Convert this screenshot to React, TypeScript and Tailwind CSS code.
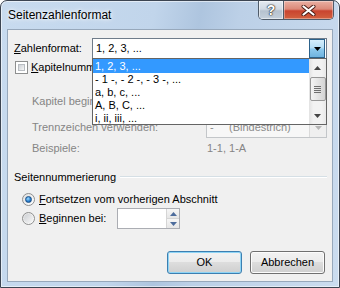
import React from 'react'

const items = ['1, 2, 3, ...', '- 1 -, - 2 -, - 3 -, ...', 'a, b, c, ...', 'A, B, C, ...', 'i, ii, iii, ...']

function Arrow({ dir, color = '#3a3a3a' }: { dir: 'up' | 'down'; color?: string }) {
  return (
    <svg width="7" height="4" viewBox="0 0 7 4">
      <polygon points={dir === 'down' ? '0,0 7,0 3.5,4' : '0,4 7,4 3.5,0'} fill={color} />
    </svg>
  )
}

function CaptionButtons() {
  return (
    <div className="ml-auto flex h-[19px] overflow-hidden rounded-b-[5px] border border-t-0 border-[#4f5b69]">
      {/* help */}
      <div className="flex w-[25px] items-center justify-center border-r border-[#4f5b69] bg-[linear-gradient(to_bottom,#e4eaf1_0%,#d1dae4_45%,#b6c2cf_55%,#c4d0dc_100%)] shadow-[inset_0_0_0_1px_rgba(255,255,255,0.5)]">
        <span className="text-[14px] leading-[14px] font-bold text-white [text-shadow:0_0_1px_#222,0_0_1px_#222,0_0_2px_#333]">?</span>
      </div>
      {/* close */}
      <div className="flex w-[49px] items-center justify-center bg-[linear-gradient(to_bottom,#eab0a3_0%,#dc8979_45%,#c9442f_55%,#d2613f_100%)] shadow-[inset_0_0_0_1px_rgba(255,255,255,0.35)]">
        <svg width="15" height="11" viewBox="0 0 15 11">
          <path d="M2.5 1.5 L12.5 9.5 M12.5 1.5 L2.5 9.5" stroke="#4a1c14" strokeWidth="4" strokeLinecap="round" />
          <path d="M2.5 1.5 L12.5 9.5 M12.5 1.5 L2.5 9.5" stroke="#ffffff" strokeWidth="2.2" strokeLinecap="round" />
        </svg>
      </div>
    </div>
  )
}

function Checkbox() {
  return (
    <div className="h-[13px] w-[13px] border border-[#8e8f8f] bg-white p-[2px]">
      <div className="h-full w-full border border-[#b9bdc2] bg-[linear-gradient(135deg,#cdd1d6,#f6f6f6)]" />
    </div>
  )
}

function Radio({ checked }: { checked?: boolean }) {
  return (
    <div className="flex h-[13px] w-[13px] items-center justify-center rounded-full border border-[#8e8f8f] bg-[linear-gradient(135deg,#e0e0e0,#ffffff)]">
      {checked ? (
        <div className="h-[7px] w-[7px] rounded-full border border-[#1b4f86] bg-[radial-gradient(circle_at_40%_35%,#9fdcff,#2a80d0_55%,#0e4d93)]" />
      ) : (
        <div className="h-[9px] w-[9px] rounded-full bg-[linear-gradient(135deg,#cdd0d4,#f7f7f7)]" />
      )}
    </div>
  )
}

function Button({ children, primary }: { children: React.ReactNode; primary?: boolean }) {
  return (
    <div
      className={
        primary
          ? 'flex h-[23px] w-[75px] items-center justify-center rounded-[3px] border border-[#3c7fb1] bg-[linear-gradient(to_bottom,#f2f2f2_0%,#ebebeb_50%,#dddddd_50%,#cfcfcf_100%)] shadow-[inset_0_0_0_1px_#8ed4f5]'
          : 'flex h-[23px] w-[75px] items-center justify-center rounded-[3px] border border-[#707070] bg-[linear-gradient(to_bottom,#f2f2f2_0%,#ebebeb_50%,#dddddd_50%,#cfcfcf_100%)] shadow-[inset_0_0_0_1px_#fcfcfc]'
      }
    >
      {children}
    </div>
  )
}

function DisabledCombo({ children }: { children?: React.ReactNode }) {
  return (
    <div className="flex h-[21px] w-[121px] items-center border border-[#c3c6c9] bg-[#f7f7f7] text-[#8a8a8a]">
      <div className="flex flex-1 items-center">{children}</div>
      <div className="flex h-full w-[17px] items-center justify-center border-l border-[#dadada] bg-[#efefef]">
        <Arrow dir="down" color="#b5b5b5" />
      </div>
    </div>
  )
}

export default function App() {
  return (
    <div className="h-[288px] w-[340px] bg-white font-['Liberation_Sans',Arial,sans-serif] text-[11px] text-black">
      <div className="flex h-full flex-col rounded-t-[7px] border border-[#3c4552] bg-[linear-gradient(100deg,#c8dbef_0%,#c1d5eb_40%,#aec5df_52%,#bcd0e7_62%,#cbdcef_100%)] shadow-[inset_0_0_0_1px_rgba(255,255,255,0.55)]">
        {/* title bar */}
        <div className="flex h-[28px] items-start pl-[7px] pr-[5px]">
          <span className="mt-[7px] text-[12px] leading-[14px] [text-shadow:0_0_6px_#fff,0_0_3px_#fff]">Seitenzahlenformat</span>
          <CaptionButtons />
        </div>

        {/* client area */}
        <div className="relative mx-[6px] mb-[5px] flex flex-1 flex-col border border-[#97a8bb] bg-[#f0f0f0]">
          <div className="mt-[8px] flex h-[21px] items-center pl-[6px]">
            <span className="w-[78px]"><u>Z</u>ahlenformat:</span>
            <div className="flex h-[21px] w-[235px] items-center border border-[#6f7c8a] bg-white">
              <span className="flex-1 pl-[3px]">1, 2, 3, ...</span>
              <div className="mr-px flex h-[19px] w-[16px] items-center justify-center border border-[#2c628b] bg-[linear-gradient(to_bottom,#d6eefb_0%,#b6def5_45%,#8cc8ec_55%,#6fb3de_100%)]">
                <Arrow dir="down" color="#000" />
              </div>
            </div>
          </div>

          <div className="mt-[2px] flex h-[13px] items-center pl-[7px]">
            <Checkbox />
            <span className="ml-[3px]"><u>K</u>apitelnummer einbeziehen</span>
          </div>

          <div className="mt-[17px] flex h-[21px] items-center pl-[24px] text-[#858585]">
            <span className="w-[174px]">Kapitel beginnt mit Formatvorlage:</span>
            <DisabledCombo>
              <span className="pl-[3px]">Überschrift 1</span>
            </DisabledCombo>
          </div>

          <div className="mt-[5px] flex h-[21px] items-center pl-[24px] text-[#858585]">
            <span className="w-[174px]">Trennzeichen verwenden:</span>
            <DisabledCombo>
              <span className="w-[22px] pl-[3px]">-</span>
              <span>(Bindestrich)</span>
            </DisabledCombo>
          </div>

          <div className="mt-[3px] flex h-[14px] items-center pl-[24px] text-[#858585]">
            <span className="w-[175px]">Beispiele:</span>
            <span>1-1, 1-A</span>
          </div>

          <div className="mt-[15px] flex h-[14px] items-center pl-[6px] pr-[5px]">
            <span>Seitennummerierung</span>
            <div className="ml-[4px] h-[2px] flex-1 border-t border-b border-t-[#d5dfe5] border-b-white" />
          </div>

          <div className="mt-[8px] flex h-[14px] items-center pl-[14px]">
            <Radio checked />
            <span className="ml-[4px]"><u>F</u>ortsetzen vom vorherigen Abschnitt</span>
          </div>

          <div className="mt-[2px] flex h-[21px] items-center pl-[14px]">
            <Radio />
            <span className="ml-[4px] w-[78px]"><u>B</u>eginnen bei:</span>
            <div className="flex h-[21px] w-[63px] border border-[#abadb3] bg-white">
              <div className="flex-1" />
              <div className="flex w-[13px] flex-col border-l border-[#d5d5d5]">
                <div className="flex flex-1 items-center justify-center border-b border-[#d5d5d5] bg-[linear-gradient(to_bottom,#f6f6f6,#e6e6e6)]">
                  <Arrow dir="up" color="#4d6c9c" />
                </div>
                <div className="flex flex-1 items-center justify-center bg-[linear-gradient(to_bottom,#f6f6f6,#e6e6e6)]">
                  <Arrow dir="down" color="#4d6c9c" />
                </div>
              </div>
            </div>
          </div>

          <div className="mt-[22px] flex h-[23px] justify-end gap-[8px] pr-[7px]">
            <Button primary>OK</Button>
            <Button>Abbrechen</Button>
          </div>

          {/* open dropdown list */}
          <div className="absolute left-[84px] top-[28px] flex h-[67px] w-[235px] border border-[#646464] bg-white">
            <div className="flex-1 overflow-hidden">
              {items.map((t, i) => (
                <div
                  key={t}
                  className={i === 0 ? 'h-[14px] bg-[#3399ff] pl-[2px] leading-[14px] text-white' : 'h-[13px] pl-[2px] leading-[13px]'}
                >
                  {t}
                </div>
              ))}
            </div>
            <div className="flex w-[17px] flex-col bg-[linear-gradient(to_right,#e2e2e2,#f2f2f2_25%,#f2f2f2_75%,#e8e8e8)]">
              <div className="flex h-[17px] items-center justify-center">
                <Arrow dir="up" color="#454545" />
              </div>
              <div className="mt-px flex h-[24px] w-[16px] flex-col items-center justify-center gap-[1px] self-center rounded-[2px] border border-[#979797] bg-[linear-gradient(to_right,#f4f4f4,#e4e4e4_50%,#d4d4d4)]">
                <div className="h-px w-[7px] bg-[#6f6f6f]" />
                <div className="h-px w-[7px] bg-[#6f6f6f]" />
                <div className="h-px w-[7px] bg-[#6f6f6f]" />
                <div className="h-px w-[7px] bg-[#6f6f6f]" />
              </div>
              <div className="flex-1" />
              <div className="flex h-[17px] items-center justify-center">
                <Arrow dir="down" color="#454545" />
              </div>
            </div>
          </div>
        </div>
      </div>
    </div>
  )
}
